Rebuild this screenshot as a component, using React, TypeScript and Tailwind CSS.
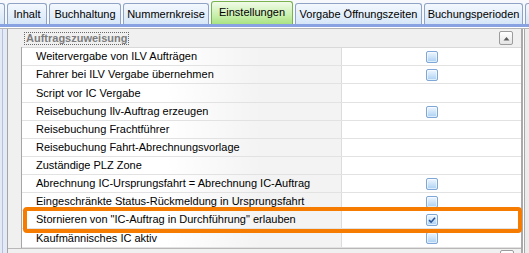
const tabs = [
  { label: '', width: 'w-[5px]', kind: 'edge' },
  { label: 'Inhalt', width: 'w-[40px]', kind: 'tab' },
  { label: 'Buchhaltung', width: 'w-[72px]', kind: 'tab' },
  { label: 'Nummernkreise', width: 'w-[86px]', kind: 'tab' },
  { label: 'Einstellungen', width: 'w-[82px]', kind: 'active' },
  { label: 'Vorgabe Öffnungszeiten', width: 'w-[127px]', kind: 'tab' },
  { label: 'Buchungsperioden', width: 'w-[99px]', kind: 'tab' },
  { label: '', width: 'w-[20px]', kind: 'tab' },
]

const rows = [
  { label: 'Weitervergabe von ILV Aufträgen', box: true, h: 'h-[18px]' },
  { label: 'Fahrer bei ILV Vergabe übernehmen', box: true, h: 'h-[18px]' },
  { label: 'Script vor IC Vergabe', box: false, h: 'h-[19px]' },
  { label: 'Reisebuchung Ilv-Auftrag erzeugen', box: true, h: 'h-[18px]' },
  { label: 'Reisebuchung Frachtführer', box: false, h: 'h-[18px]' },
  { label: 'Reisebuchung Fahrt-Abrechnungsvorlage', box: false, h: 'h-[18px]' },
  { label: 'Zuständige PLZ Zone', box: false, h: 'h-[18px]' },
  { label: 'Abrechnung IC-Ursprungsfahrt = Abrechnung IC-Auftrag', box: true, h: 'h-[18px]' },
  { label: 'Eingeschränkte Status-Rückmeldung in Ursprungsfahrt', box: true, h: 'h-[18px]' },
  { label: 'Stornieren von "IC-Auftrag in Durchführung" erlauben', box: true, checked: true, h: 'h-[18px]' },
  { label: 'Kaufmännisches IC aktiv', box: true, h: 'h-[19px]' },
]

function CheckBox({ checked }: { checked?: boolean }) {
  return (
    <span className="flex h-[12px] w-[12px] items-center justify-center rounded-[2px] border border-[#7ea6d6] bg-[linear-gradient(#eef6ff,#cfe4f9_50%,#a9cff2)] shadow-[inset_0_0_0_1px_rgba(255,255,255,0.6)]">
      {checked && (
        <svg width="8" height="8" viewBox="0 0 8 8">
          <path d="M1 4.2 L3.1 6.2 L7 1.8" fill="none" stroke="#2a5598" strokeWidth="1.6" />
        </svg>
      )}
    </span>
  )
}

function CollapseButton() {
  return (
    <span className="flex h-[14px] w-[14px] items-center justify-center rounded-[2px] border border-[#9c9c9c] bg-[linear-gradient(#ffffff,#e4e4e4)]">
      <svg width="7" height="5" viewBox="0 0 7 5">
        <path d="M0.5 4.5 L3.5 1 L6.5 4.5 Z" fill="#5a5a5a" />
      </svg>
    </span>
  )
}

export default function App() {
  return (
    <div className="relative h-[253px] w-[529px] overflow-hidden bg-white font-['Liberation_Sans',Arial,sans-serif] text-[11px] text-black">
      {/* tab strip */}
      <div className="flex h-[24px] items-end gap-[2px] overflow-hidden bg-[#f6f8fc]">
        {tabs.map((t, i) => {
          if (t.kind === 'edge') {
            return (
              <div
                key={i}
                className={`${t.width} h-[21px] shrink-0 rounded-tr-[3px] border border-b-0 border-l-0 border-[#8ea3c6] bg-[linear-gradient(#f3f8fd,#d6e6f7)]`}
              />
            )
          }
          if (t.kind === 'active') {
            return (
              <div
                key={i}
                className={`${t.width} flex h-[23px] shrink-0 items-center justify-center rounded-t-[3px] border border-b-0 border-[#78b34d] bg-[linear-gradient(#f1fbe8,#c9efad_60%,#a9e383)] pb-[1px] whitespace-nowrap`}
              >
                {t.label}
              </div>
            )
          }
          return (
            <div
              key={i}
              className={`${t.width} flex h-[21px] shrink-0 items-center justify-center rounded-t-[3px] border border-b-0 border-[#8ea3c6] bg-[linear-gradient(#f3f8fd,#d6e6f7)] whitespace-nowrap`}
            >
              {t.label}
            </div>
          )
        })}
      </div>
      <div className="h-[3px] bg-[#88a2e2]" />
      <div className="h-[1px] bg-white" />

      {/* main area */}
      <div className="flex h-[225px] border-t border-[#b4b4b4]">
        <div className="flex w-[8px] shrink-0 border-r border-[#a4a4a4] bg-[#e4eaf5]">
          <div className="ml-[2px] w-[1px] bg-[#b3c1dc]" />
        </div>

        <div className="flex w-[515px] shrink-0 flex-col border-r-2 border-[#a9a9a9] bg-[#f0f0f0]">
          {/* section header */}
          <div className="flex h-[18px] shrink-0 items-center pl-[16px] pr-[8px]">
            <span className="border border-dotted border-[#6a6a6a] px-[1px] leading-[11px] font-bold text-[#7c7c7c]">
              Auftragszuweisung
            </span>
            <span className="ml-auto">
              <CollapseButton />
            </span>
          </div>

          {/* rows */}
          <div className="flex">
            <div className="w-[14px] shrink-0 border-r border-[#a6a6a6] bg-[#f0f0f0]" />
            <div className="flex-1 border-t border-[#d9d9d9]">
              {rows.map((r, i) => (
                <div key={i} className={`${r.h} flex border-b border-[#e2e2e2]`}>
                  <div className="flex w-[320px] shrink-0 items-center border-r border-[#dcdcdc] bg-[linear-gradient(to_right,#ffffff_45%,#f3f3f3_75%)] pl-[14px] whitespace-nowrap">
                    {r.label}
                  </div>
                  <div className="flex flex-1 items-center justify-center bg-white">
                    {r.box && <CheckBox checked={r.checked} />}
                  </div>
                </div>
              ))}
            </div>
          </div>

          {/* next section header, cut off */}
          <div className="flex flex-1 items-start border-t border-[#b8b8b8] pr-[7px] pt-[1px]">
            <span className="ml-auto">
              <CollapseButton />
            </span>
          </div>
        </div>

        <div className="flex w-[6px] shrink-0 bg-[#ececec]">
          <div className="w-[1px] bg-white" />
          <div className="w-[1px] bg-[#a8a8a8]" />
        </div>
      </div>

      {/* highlight annotation */}
      <div className="absolute left-[23px] top-[207px] h-[26px] w-[499px] rounded-[4px] border-4 border-[#f57c00]" />
    </div>
  )
}
